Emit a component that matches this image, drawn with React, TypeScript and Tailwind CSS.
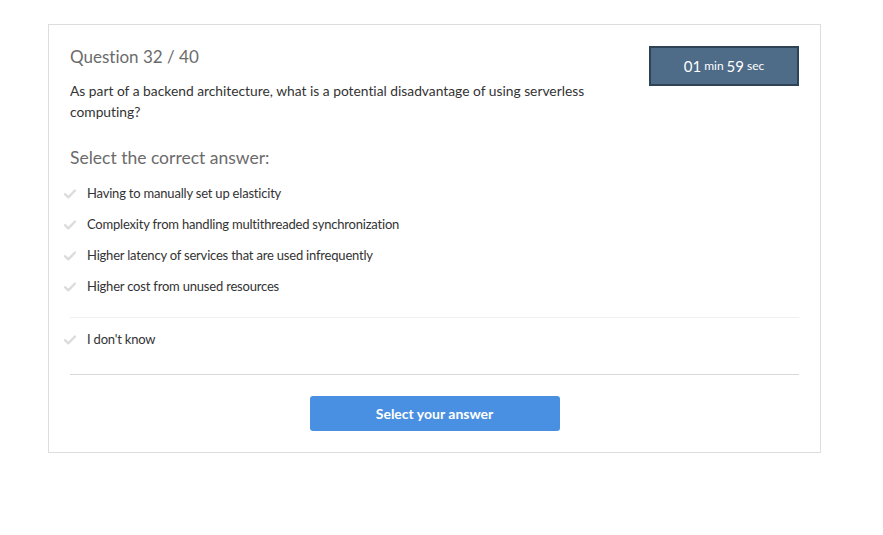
const options = [
  "Having to manually set up elasticity",
  "Complexity from handling multithreaded synchronization",
  "Higher latency of services that are used infrequently",
  "Higher cost from unused resources",
];

const Check = () => (
  <svg viewBox="0 0 12 10" className="w-[12px] h-[10px] shrink-0" fill="none">
    <path
      d="M1 5.2 4.3 8.3 11 1.5"
      stroke="#dcdcdc"
      strokeWidth="2.4"
      strokeLinecap="round"
      strokeLinejoin="round"
    />
  </svg>
);

const Option = ({ label }: { label: string }) => (
  <li className="flex items-center gap-[11px] h-[31px] ml-[-6px]">
    <Check />
    <span className="text-[13px] text-[#333] tracking-[-0.2px]">{label}</span>
  </li>
);

export default function App() {
  return (
    <div className="font-['Lato',sans-serif] [font-variant-ligatures:none] bg-white min-h-[535px] pt-[24px] pl-[48px]">
      <div className="w-[773px] border border-[#dddddd] px-[21px] pt-[20px] pb-[21px]">
        <div className="flex justify-between">
          <div className="w-[540px]">
            <h1 className="text-[17px] text-[#6b6b6b] leading-[24px]">Question 32 / 40</h1>
            <p className="text-[13.8px] text-[#333] leading-[21px] mt-[11px]">
              As part of a backend architecture, what is a potential disadvantage of using serverless
              computing?
            </p>
          </div>
          <div className="mt-[1px] w-[150px] h-[40px] bg-[#4e6b87] border-2 border-[#2f4356] flex items-center justify-center text-white">
            <span className="text-[15px]">01</span>
            <span className="text-[12px] ml-[3px]">min</span>
            <span className="text-[15px] ml-[3px]">59</span>
            <span className="text-[12px] ml-[3px]">sec</span>
          </div>
        </div>
        <h2 className="text-[17.5px] text-[#6b6b6b] mt-[24px] leading-[24px]">Select the correct answer:</h2>
        <ul className="mt-[8px]">
          {options.map((o) => (
            <Option key={o} label={o} />
          ))}
        </ul>
        <hr className="border-[#f0f0f0] mt-[15px]" />
        <ul className="mt-[6px]">
          <Option label="I don't know" />
        </ul>
        <hr className="border-[#d9d9d9] mt-[19px]" />
        <div className="flex justify-center mt-[21px]">
          <button className="w-[250px] h-[35px] bg-[#4a90e2] rounded-[3px] text-white font-bold text-[14px]">
            Select your answer
          </button>
        </div>
      </div>
    </div>
  );
}
